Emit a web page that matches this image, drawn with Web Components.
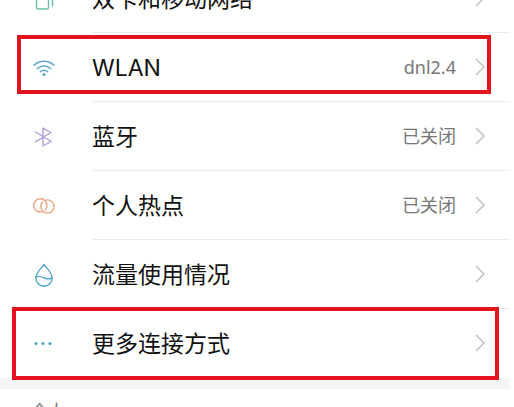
<!DOCTYPE html>
<html lang="zh-CN">
<head>
<meta charset="UTF-8" />
<meta name="viewport" content="width=device-width, initial-scale=1" />
<title>设置</title>
<style>
  body {
    margin: 0;
    background: #fff;
    font-family: "Noto Sans", "Noto Sans CJK SC", sans-serif;
    color: #111;
  }
</style>
</head>
<body>
<settings-page>
  <setting-row icon="sim" color="#6bbfa9" label="双卡和移动网络"></setting-row>
  <setting-row icon="wifi" color="#5aa9cf" label="WLAN" marked="inner">dnl2.4</setting-row>
  <setting-row icon="bluetooth" color="#b9a0dc" label="蓝牙">已关闭</setting-row>
  <setting-row icon="hotspot" color="#eba584" label="个人热点">已关闭</setting-row>
  <setting-row icon="data" color="#4fa5c9" label="流量使用情况"></setting-row>
  <setting-row icon="more" color="#4fa5bf" label="更多连接方式" marked="outer"></setting-row>
  <section-title>个人</section-title>
</settings-page>

<script>
const icons = {
  sim: `<path d="M6 3h9a1.500 1.500 0 0 1 1.500 1.500v16a1.500 1.500 0 0 1-1.500 1.500H6a1.500 1.500 0 0 1-1.500-1.500v-16A1.500 1.500 0 0 1 6 3z"/><path d="M20.500 5v14"/>`,
  wifi: `<path d="M2 9.300a14.500 14.500 0 0 1 20 0M5.200 12.700a10 10 0 0 1 13.600 0M8.300 15.800a5.700 5.700 0 0 1 7.400 0"/><circle cx="12" cy="18.500" r="1.600" fill="currentColor" stroke="none"/>`,
  bluetooth: `<path d="M3.500 7L19 16.300L11 21V3l8 4.500L3.500 16.800"/>`,
  hotspot: `<path d="M10.500 17.500A6.600 6.600 0 1 1 14.800 12c0 1.500-.5 2.900-1.400 4"/><path d="M12.800 6.500A6.600 6.600 0 1 1 8.900 12c0-1.500.5-2.900 1.400-4"/>`,
  data: `<path d="M12 1.500C9.500 5 3.800 10 3.800 15a8.200 8.200 0 0 0 16.400 0C20.200 10 14.500 5 12 1.500z"/><path d="M4 14.200c3-1.800 5.300-.8 8 .6s5.200 1.600 8 0"/>`,
  more: `<g fill="currentColor" stroke="none"><circle cx="4" cy="11.500" r="1.600"/><circle cx="11" cy="11.500" r="1.600"/><circle cx="18" cy="11.500" r="1.600"/></g>`,
};

class SettingsPage extends HTMLElement {
  constructor() {
    super();
    this.attachShadow({ mode: "open" });
  }

  connectedCallback() {
    this.shadowRoot.innerHTML = `
      <style>
        :host {
          display: block;
          height: 100vh;
          overflow: hidden;
        }
        /* the list is scrolled by half a row */
        main {
          margin: -36px 4px 0 0;
        }
      </style>
      <main><slot></slot></main>
    `;
  }
}

class SettingIcon extends HTMLElement {
  constructor() {
    super();
    this.attachShadow({ mode: "open" });
  }

  connectedCallback() {
    this.shadowRoot.innerHTML = `
      <style>
        :host {
          display: block;
          width: 24px;
          height: 24px;
        }
        svg {
          display: block;
          width: 100%;
          height: 100%;
          fill: none;
          stroke: currentColor;
          stroke-width: 1.4;
          stroke-linecap: round;
          stroke-linejoin: round;
        }
      </style>
      <svg viewBox="0 0 24 24" aria-hidden="true">${icons[this.getAttribute("name")]}</svg>
    `;
  }
}

class SettingRow extends HTMLElement {
  constructor() {
    super();
    this.attachShadow({ mode: "open" });
  }

  connectedCallback() {
    const icon = this.getAttribute("icon");
    const color = this.getAttribute("color");
    const label = this.getAttribute("label");

    this.shadowRoot.innerHTML = `
      <style>
        :host {
          display: block;
          position: relative;
        }
        a {
          display: flex;
          align-items: center;
          padding-left: 32px;
          color: inherit;
          text-decoration: none;
        }
        .content {
          flex: 1;
          display: flex;
          align-items: center;
          height: 68px;
          margin-left: 36px;
          border-bottom: 1px solid #ececec;
        }
        :host([icon="more"]) .content {
          border-bottom-color: transparent;
        }
        .label {
          flex: 1;
          padding-top: 2px;
          font-family: Inter, "Noto Sans CJK SC", sans-serif;
          font-size: 23px;
          line-height: 32px;
        }
        .value {
          font-size: 18px;
          line-height: 24px;
          color: #777;
        }
        .arrow {
          width: 10px;
          height: 18px;
          margin: 0 25px 0 19px;
          fill: none;
          stroke: #bdbdbd;
          stroke-width: 1.4;
        }
        :host([marked])::after {
          content: "";
          position: absolute;
          border: 4px solid #e3131d;
          pointer-events: none;
        }
        :host([marked="inner"])::after {
          inset: 2px 19px 8px 17px;
        }
        :host([marked="outer"])::after {
          inset: -2px 11px -2px 12px;
        }
      </style>
      <a href="#${icon}">
        <setting-icon name="${icon}" style="color: ${color}"></setting-icon>
        <span class="content">
          <span class="label">${label}</span>
          <span class="value"><slot></slot></span>
          <svg class="arrow" viewBox="0 0 10 18" aria-hidden="true"><path d="M1 1l8 8-8 8"/></svg>
        </span>
      </a>
    `;
  }
}

class SectionTitle extends HTMLElement {
  constructor() {
    super();
    this.attachShadow({ mode: "open" });
  }

  connectedCallback() {
    this.shadowRoot.innerHTML = `
      <style>
        :host {
          display: block;
          border-top: 11px solid #f5f5f5;
        }
        h2 {
          margin: 0;
          padding: 10px 31px;
          font-size: 17px;
          line-height: 24px;
          font-weight: normal;
          color: #777;
        }
      </style>
      <h2><slot></slot></h2>
    `;
  }
}

customElements.define("settings-page", SettingsPage);
customElements.define("setting-icon", SettingIcon);
customElements.define("setting-row", SettingRow);
customElements.define("section-title", SectionTitle);
</script>
</body>
</html>
